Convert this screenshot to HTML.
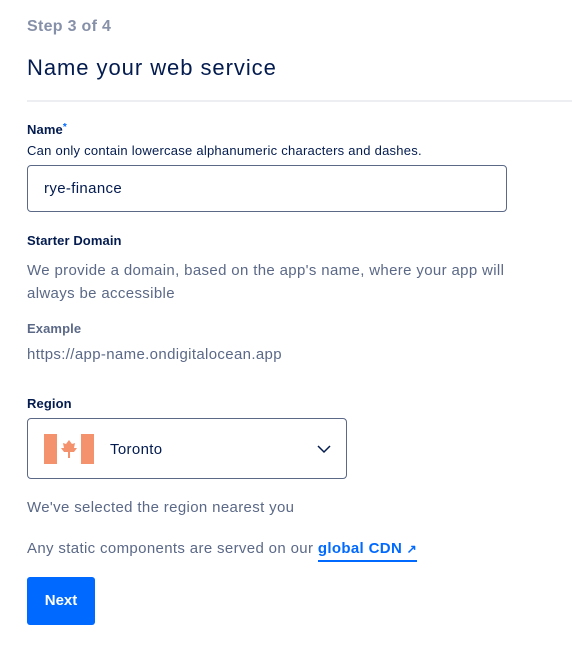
<!DOCTYPE html>
<html><head><style>
body{margin:0;width:572px;height:648px;background:#fff;font-family:"Liberation Sans",sans-serif;position:relative;overflow:hidden}
.a{position:absolute;white-space:nowrap}
.lbl{font-size:13px;font-weight:bold;color:#031b4e;letter-spacing:0.1px}
.txt{font-size:15px;color:#5b6987;letter-spacing:0.35px}
</style></head><body>
<div class="a" style="left:27px;top:18px;font-size:16px;font-weight:bold;color:#8690a8;letter-spacing:0.3px">Step 3 of 4</div>
<div class="a" style="left:27px;top:55px;font-size:22px;color:#031b4e;letter-spacing:0.95px">Name your web service</div>
<div class="a" style="left:27px;top:100px;width:545px;height:2px;background:#eceef2"></div>
<div class="a lbl" style="left:27px;top:122px">Name<span style="color:#0069ff;font-size:10px;vertical-align:top">*</span></div>
<div class="a" style="left:27px;top:143px;font-size:13px;color:#031b4e;letter-spacing:0.25px">Can only contain lowercase alphanumeric characters and dashes.</div>
<div class="a" style="left:27px;top:165px;width:478px;height:45px;border:1px solid #5b6987;border-radius:4px"></div>
<div class="a" style="left:44px;top:180px;font-size:15px;color:#031b4e;letter-spacing:0.35px">rye-finance</div>
<div class="a lbl" style="left:27px;top:233px">Starter Domain</div>
<div class="a txt" style="left:27px;top:259px;line-height:23px">We provide a domain, based on the app's name, where your app will<br>always be accessible</div>
<div class="a lbl" style="left:27px;top:321px;color:#5b6987">Example</div>
<div class="a txt" style="left:27px;top:346px">https://app-name.ondigitalocean.app</div>
<div class="a lbl" style="left:27px;top:396px">Region</div>
<div class="a" style="left:27px;top:418px;width:318px;height:59px;border:1px solid #5b6987;border-radius:4px"></div>
<svg class="a" style="left:44px;top:434px" width="50" height="30" viewBox="0 0 50 30"><rect width="13" height="30" fill="#f5926e"/><rect x="37" width="13" height="30" fill="#f5926e"/><path d="M25 6 L28 10 L31 9 L30 14 L33 14 L30 18 L26 18 L26 24 L24 24 L24 18 L20 18 L17 14 L20 14 L19 9 L22 10 Z" fill="#f5926e"/></svg>
<div class="a" style="left:110px;top:441px;font-size:15px;color:#031b4e;letter-spacing:0.35px">Toronto</div>
<svg class="a" style="left:317px;top:444px" width="14" height="10" viewBox="0 0 14 10"><path d="M1 2 L7 8 L13 2" fill="none" stroke="#031b4e" stroke-width="1.5"/></svg>
<div class="a txt" style="left:27px;top:499px">We've selected the region nearest you</div>
<div class="a txt" style="left:27px;top:540px">Any static components are served on our <span style="color:#0069ff;font-weight:bold;border-bottom:2px solid #0069ff;padding-bottom:3px">global CDN <span style="font-size:12px">↗</span></span></div>
<div class="a" style="left:27px;top:577px;width:68px;height:48px;background:#0069ff;border-radius:3px;color:#fff;font-weight:bold;font-size:15px;text-align:center;line-height:48px">Next</div>
</body></html>
